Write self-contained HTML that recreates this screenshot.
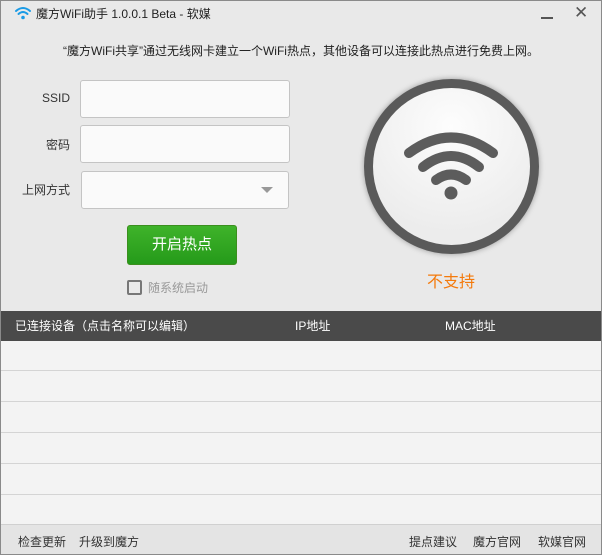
<!DOCTYPE html>
<html><head><meta charset="utf-8"><style>
*{margin:0;padding:0;box-sizing:border-box}
body{width:602px;height:555px;overflow:hidden;background:#e9e9e9;font-family:"Liberation Sans","Noto Sans CJK SC",sans-serif;font-size:12px;color:#222;position:relative}
.win{position:absolute;left:0;top:0;width:602px;height:555px;border:1px solid #8a8a8a;z-index:5;pointer-events:none}
.a{position:absolute}
.inp{position:absolute;background:#fafafa;border:1px solid #c4c4c4;border-radius:3px}
.lbl{position:absolute;width:70px;text-align:right;font-size:12px;color:#333}
.row{position:absolute;left:1px;width:600px;height:1px;background:#d4d4d4}
</style></head><body>
<svg class="a" style="left:14px;top:6px" width="18" height="14" viewBox="0 0 18 14"><g fill="none" stroke="#1a9be6" stroke-width="2" stroke-linecap="round"><path d="M2 5Q9-1 16 5"/><path d="M4.5 8Q9 4 13.5 8"/></g><circle cx="9" cy="11.5" r="1.8" fill="#1a9be6"/></svg>
<div class="a" style="left:36px;top:5px;font-size:12px;color:#222">魔方WiFi助手 1.0.0.1 Beta - 软媒</div>
<div class="a" style="left:541px;top:17px;width:12px;height:2px;background:#555"></div>
<div class="a" style="left:574px;top:3px;font-size:17px;color:#555">✕</div>
<div class="a" style="left:1px;top:42px;width:600px;text-align:center;font-size:12px;color:#222">“魔方WiFi共享”通过无线网卡建立一个WiFi热点，其他设备可以连接此热点进行免费上网。</div>
<div class="lbl" style="left:0;top:91px">SSID</div>
<div class="inp" style="left:80px;top:80px;width:210px;height:38px"></div>
<div class="lbl" style="left:0;top:136px">密码</div>
<div class="inp" style="left:80px;top:125px;width:210px;height:38px"></div>
<div class="lbl" style="left:0;top:181px">上网方式</div>
<div class="inp" style="left:81px;top:171px;width:208px;height:38px"></div>
<div class="a" style="left:261px;top:187px;width:0;height:0;border-left:6px solid transparent;border-right:6px solid transparent;border-top:6px solid #999"></div>
<div class="a" style="left:127px;top:225px;width:110px;height:40px;border:1px solid #3b8f1e;border-radius:3px;background:linear-gradient(#3fb32a,#259a1a);color:#fff;font-size:15px;text-align:center;line-height:38px">开启热点</div>
<div class="a" style="left:127px;top:280px;width:15px;height:15px;border:2px solid #777;border-radius:2px"></div>
<div class="a" style="left:148px;top:279px;color:#999;font-size:12px">随系统启动</div>
<div class="a" style="left:364px;top:79px;width:175px;height:175px;border-radius:50%;background:#5a5a5a;box-shadow:0 0 6px rgba(0,0,0,.35)"></div>
<div class="a" style="left:373px;top:88px;width:157px;height:157px;border-radius:50%;background:radial-gradient(circle at 50% 25%,#fdfdfd,#ececec 75%)"></div>
<svg class="a" style="left:401px;top:130px" width="100" height="70" viewBox="0 0 100 70"><g fill="none" stroke="#5c5c5c" stroke-width="10" stroke-linecap="round"><path d="M8 23Q50 -8 92 23"/><path d="M22 37Q50 15 78 37"/><path d="M35 50Q50 39 65 50"/></g><circle cx="50" cy="63" r="6.5" fill="#5c5c5c"/></svg>
<div class="a" style="left:0;top:268px;width:902px;text-align:center;font-size:16px;color:#f47a0c">不支持</div>
<div class="a" style="left:1px;top:311px;width:600px;height:30px;background:#4a4a4a;color:#fff;font-size:12px">
<span class="a" style="left:14px;top:6px">已连接设备（点击名称可以编辑）</span><span class="a" style="left:294px;top:6px">IP地址</span><span class="a" style="left:444px;top:6px">MAC地址</span></div>
<div class="a" style="left:1px;top:341px;width:600px;height:184px;background:#f3f3f3"></div>
<div class="row" style="top:370px"></div><div class="row" style="top:401px"></div><div class="row" style="top:432px"></div><div class="row" style="top:463px"></div><div class="row" style="top:494px"></div>
<div class="row" style="top:524px;background:#d0d0d0"></div>
<div class="a" style="left:1px;top:525px;width:600px;height:29px;background:#e4e4e4;color:#333;font-size:12px">
<span class="a" style="left:17px;top:8px">检查更新</span><span class="a" style="left:78px;top:8px">升级到魔方</span>
<span class="a" style="left:408px;top:8px">提点建议</span><span class="a" style="left:472px;top:8px">魔方官网</span><span class="a" style="left:537px;top:8px">软媒官网</span></div>
<div class="win"></div>
</body></html>
